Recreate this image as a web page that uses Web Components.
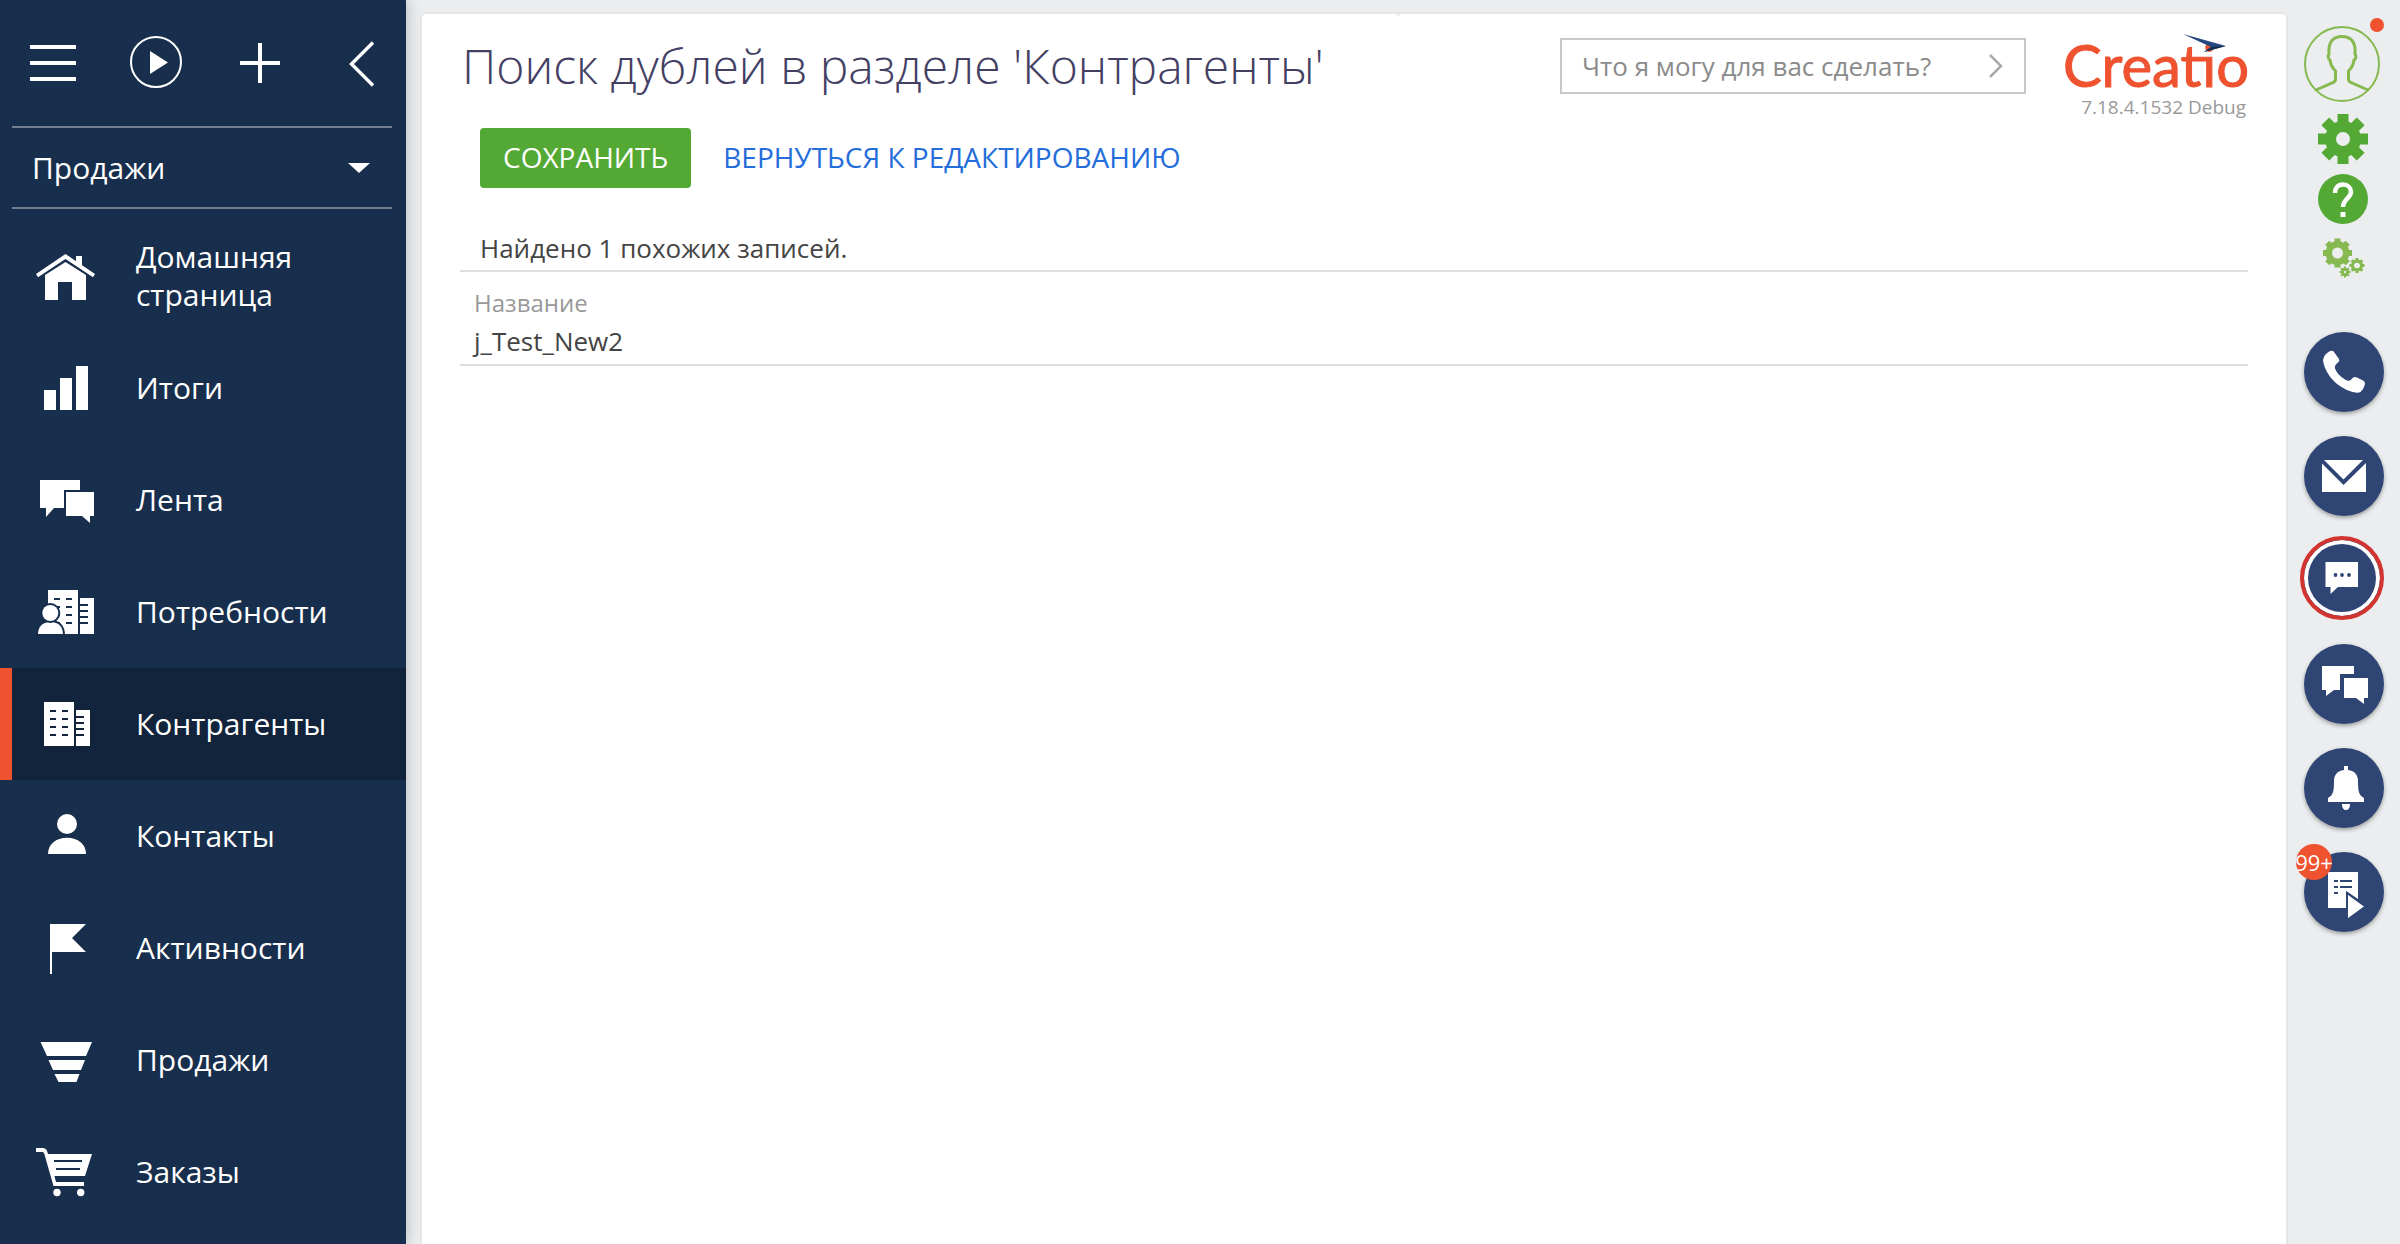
<!DOCTYPE html>
<html lang="ru">
<head>
<meta charset="utf-8">
<title>Поиск дублей</title>
<style>
  html, body { margin: 0; height: 100%; }
  body { font-family: "Open Sans", "Noto Sans", sans-serif; font-size: 26px; color: #444; background: #ebedef; }
</style>
</head>
<body>
<crm-shell>
  <crm-sidebar slot="nav">
    <crm-nav-item icon="home">Домашняя страница</crm-nav-item>
    <crm-nav-item icon="bars">Итоги</crm-nav-item>
    <crm-nav-item icon="feed">Лента</crm-nav-item>
    <crm-nav-item icon="leads">Потребности</crm-nav-item>
    <crm-nav-item icon="accounts" active>Контрагенты</crm-nav-item>
    <crm-nav-item icon="contact">Контакты</crm-nav-item>
    <crm-nav-item icon="flag">Активности</crm-nav-item>
    <crm-nav-item icon="funnel">Продажи</crm-nav-item>
    <crm-nav-item icon="cart">Заказы</crm-nav-item>
  </crm-sidebar>
  <crm-page>
    <crm-header slot="header" version="7.18.4.1532 Debug">Поиск дублей в разделе 'Контрагенты'</crm-header>
    <crm-button slot="actions" kind="primary">СОХРАНИТЬ</crm-button>
    <crm-button slot="actions" kind="flat">ВЕРНУТЬСЯ К РЕДАКТИРОВАНИЮ</crm-button>
    <crm-duplicates name="j_Test_New2">Найдено 1 похожих записей.</crm-duplicates>
  </crm-page>
  <crm-rail slot="rail"></crm-rail>
</crm-shell>

<script>
const define = (name, markup, setup) => customElements.define(name, class extends HTMLElement {
  connectedCallback() {
    if (this.shadowRoot) return;
    const root = this.attachShadow({ mode: 'open' });
    root.innerHTML = '<style>:host,*{box-sizing:border-box}button,input,select{font:inherit;color:inherit;margin:0}svg{display:block;flex:none}</style>' +
      (typeof markup === 'function' ? markup(this) : markup);
    if (setup) setup(root, this);
  }
});

define('crm-shell', `
<style>
  :host { display: flex; height: 100vh; overflow: hidden; }
  main { flex: 1; min-width: 0; display: flex; padding: 12px 0 0 14px; }
</style>
<slot name="nav"></slot><main><slot></slot></main><slot name="rail"></slot>`);

define('crm-sidebar', `
<style>
  :host { display: flex; flex-direction: column; flex: none; width: 406px; background: #172e4c; color: #fff;
          font-size: 30px; box-shadow: 0 0 14px rgba(0,0,0,.25); }
  .tools { display: flex; gap: 50px; height: 126px; padding: 30px 0 0 28px; }
  .tools button { flex: none; width: 52px; height: 64px; padding: 0; border: 0; background: none; cursor: pointer; }
  .place { margin: 0 14px 0 12px; border-top: 2px solid #737e90; border-bottom: 2px solid #737e90; }
  label { display: flex; align-items: center; height: 79px; padding-right: 22px; }
  select { appearance: none; flex: 1; height: 79px; border: 0; padding: 0 0 0 20px; background: none; outline: 0; }
  option { color: #222; }
  nav { padding-top: 11px; }
</style>
<div class="tools">
  <button aria-label="Меню"><svg width="52" height="64"><path fill="#fff" d="M2 15h46v4H2zM2 31h46v4H2zM2 47h46v4H2z"/></svg></button>
  <button aria-label="Запуск процесса"><svg width="52" height="64"><circle cx="26" cy="32" r="25" fill="none" stroke="#fff" stroke-width="2"/><path fill="#fff" d="M20 21v23l18-11.500z"/></svg></button>
  <button aria-label="Добавить"><svg width="52" height="64"><path fill="#fff" d="M8 31h40v4H8zM26 13h4v40h-4z"/></svg></button>
  <button aria-label="Свернуть"><svg width="52" height="64"><path fill="none" stroke="#fff" stroke-width="3.400" d="M39 12.500 17.500 34 39 55.500"/></svg></button>
</div>
<div class="place"><label>
  <select aria-label="Рабочее место"><option>Продажи</option></select>
  <svg width="22" height="10"><path fill="#fff" d="M0 0h22L11 10z"/></svg>
</label></div>
<nav><slot></slot></nav>`);

const building = (x) => `<path fill="#fff" fill-rule="evenodd" transform="translate(${x})" d="M0 34h30v44H0zM6 42v2h6v-2zM18 42v2h6v-2zM6 50v2h6v-2zM18 50v2h6v-2zM6 58v2h6v-2zM18 58v2h6v-2zM6 66v2h6v-2zM18 66v2h6v-2zM32 42h14v36H32v-10h8v-2h-8v-4h8v-2h-8v-4h8v-2h-8v-4h8v-2h-8z"/>`;
const NAV = {
  home: '<path d="M36 54 65.500 34 95 54l-2 3.200L65.500 39 38 57.200z"/><path d="M76 36h6v10l-6-4z"/><path d="M45 55 65.500 42 86 55v25H72V62H58v18H45z"/>',
  bars: '<path d="M44 58h12v20H44zM60 46h12v32H60zM76 34h12v44H76z"/>',
  feed: '<path d="M40 36h40v10H64v18H54l-8 9v-9h-6zM66 48h28v24h-4v7l-8-7H66z"/>',
  leads: building(48) + '<g stroke="#172e4c" stroke-width="4" paint-order="stroke"><path d="M38 79c0-8 4-13 12.500-13S63 71 63 79z"/><circle cx="50.300" cy="57" r="8"/></g><path fill="#172e4c" d="M36 78h30v4H36z"/>',
  accounts: building(44),
  contact: '<circle cx="67" cy="44" r="10"/><path d="M48 74c0-10 8-16.300 19-16.300S86 64 86 74z"/>',
  flag: '<path d="M50 32h36L72 46l14 14H52v22h-2z"/>',
  funnel: '<path d="M40.500 38H92l-6 14H47zM48.500 56H85l-4 10H53zM54.500 70H79.500L76.500 78h-18z"/>',
  cart: '<path fill-rule="evenodd" d="M36 32h6c4 0 5 2 6 6h44l-7 22H54.500l1.500 6h28v4H53.500L44.500 38.500C44 36.500 43.500 36 41.500 36H36zM54 44v2h28v-2zM56 52v2h24v-2z"/><circle cx="57" cy="76.500" r="3.700"/><circle cx="80.700" cy="76.500" r="3.700"/>'
};
define('crm-nav-item', (el) => `
<style>
  :host { display: block; }
  a { display: flex; align-items: center; height: 112px; border-left: 12px solid transparent; padding-right: 40px;
      color: #fff; text-decoration: none; line-height: 38px; }
  :host([active]) a { background: #11243c; border-left-color: #ef522f; }
</style>
<a href="#"><svg width="124" height="112" viewBox="12 0 124 112" fill="#fff">${NAV[el.getAttribute('icon')]}</svg><span><slot></slot></span></a>`);

define('crm-page', `
<style>
  :host { display: flex; flex-direction: column; flex: 1; min-width: 0; position: relative; background: #fff;
          border: 2px solid #e4e6e7; border-bottom: 0; border-radius: 6px 6px 0 0; padding: 18px 38px 0; }
  :host::before { content: ""; position: absolute; top: 0; left: 52.200%; border: 3px solid transparent; border-top-color: #ebedef; border-bottom: 0; }
  .actions { display: flex; gap: 32px; margin: 8px 0 42px 20px; }
</style>
<slot name="header"></slot>
<div class="actions"><slot name="actions"></slot></div>
<slot></slot>`);

define('crm-header', (el) => `
<style>
  :host { display: flex; align-items: flex-start; gap: 40px; }
  h1 { flex: 1; margin: 0; padding-left: 2px; font-size: 48px; line-height: 68px; font-weight: 300; color: #444064; white-space: nowrap; }
  .ask { display: flex; align-items: center; width: 466px; height: 56px; margin-top: 6px; border: 2px solid #c8c8c8; padding: 0 20px; }
  input { flex: 1; min-width: 0; height: 52px; border: 0; padding: 0; outline: 0; background: none; }
  input::placeholder { color: #8b8b8b; opacity: 1; }
  .ask button { border: 0; background: none; padding: 0; }
  .brand { margin-top: 2px; text-align: right; font-size: 19px; line-height: 26px; color: #999; }
  .brand svg { overflow: visible; margin-bottom: 2px; }
  .brand div { padding-right: 2px; }
</style>
<h1><slot></slot></h1>
<div class="ask"><input type="text" aria-label="Команда" placeholder="Что я могу для вас сделать?">
  <button aria-label="Выполнить"><svg width="16" height="26"><path fill="none" stroke="#aaa" stroke-width="2.500" d="M2 2l11 11L2 24"/></svg></button></div>
<div class="brand">
  <svg width="182" height="58"><text x="-3" y="53" font-family="Lato, sans-serif" font-size="58" fill="#ef522f" stroke="#ef522f">Creatio</text>
    <path fill="#24487f" d="M117 0l43 12-22 6 7-5z"/><path fill="#152c50" d="M160 12l-22 6 7-5z"/></svg>
  <div>${el.getAttribute('version')}</div>
</div>`);

define('crm-button', `
<style>
  :host { display: block; font-size: 28px; }
  button { height: 60px; border: 0; border-radius: 4px; padding: 0 0 2px; background: none; color: #246ddb; cursor: pointer; white-space: nowrap; }
  :host([kind=primary]) button { background: #53a934; color: #fff; padding: 0 23px 2px; }
</style>
<button><slot></slot></button>`);

define('crm-duplicates', (el) => `
<style>
  :host { display: block; }
  p { margin: 0; padding: 0 20px 4px; line-height: 36px; border-bottom: 2px solid #dedede; }
  dl { margin: 0; padding: 12px 14px 4px; line-height: 38px; border-bottom: 2px solid #dedede; }
  dt { font-size: 24px; color: #999; }
  dd { margin: 0; }
</style>
<p><slot></slot></p>
<dl><dt>Название</dt><dd>${el.getAttribute('name')}</dd></dl>`);

// Gear outline: n teeth between the outer and root radius, with a round hole.
const gear = (cx, cy, n, ro, rr, hole, tooth, fill) => {
  let s = '';
  for (let i = 0; i < n; i++) s += `<rect x="${cx - tooth / 2}" y="${cy - ro}" width="${tooth}" height="${ro - rr + 3}" transform="rotate(${i * 360 / n} ${cx} ${cy})"/>`;
  const w = rr - hole;
  return `<g fill="${fill}">${s}</g><circle cx="${cx}" cy="${cy}" r="${hole + w / 2}" fill="none" stroke="${fill}" stroke-width="${w}"/>`;
};

define('crm-rail', `
<style>
  :host { display: block; flex: none; width: 112px; padding: 26px 16px 0; }
  .top, .calls { display: flex; flex-direction: column; align-items: flex-start; }
  button { border: 0; background: none; padding: 0; cursor: pointer; display: block; }
  .avatar { position: relative; margin-bottom: 12px; }
  .avatar i { position: absolute; left: 66px; top: -8px; width: 14px; height: 14px; border-radius: 50%; background: #ef522f; }
  .tool { margin: 0 0 10px 14px; }
  .calls { gap: 24px; margin-top: 38px; }
</style>
<div class="top">
  <button class="avatar" aria-label="Профиль"><svg width="76" height="76" fill="none" stroke="#87b951">
    <circle cx="38" cy="38" r="37" stroke-width="2"/>
    <path stroke-width="3" d="M12 64l18-8 1.500-2V45c-3-3-5-7-5.500-11-2-1-2.500-4-1-6-1-12 4-17.500 13-17.500S52 16 51 28c1.500 2 1 5-1 6-.5 4-2.500 8-5.500 11v9l1.500 2 18 8"/></svg><i></i></button>
  <button class="tool" aria-label="Настройки"><svg width="50" height="50">${gear(25, 25, 8, 25, 18, 7, 11, '#53a934')}</svg></button>
  <button class="tool" aria-label="Справка"><svg width="50" height="50"><circle cx="25" cy="25" r="25" fill="#53a934"/>
    <path fill="none" stroke="#fff" stroke-width="4.500" d="M17 19c0-5 3-8.500 8-8.500s8 3.500 8 7.500c0 6-8 7-8 15"/><path fill="#fff" d="M22.500 38h5v5h-5z"/></svg></button>
  <button class="tool" aria-label="Конструктор"><svg width="50" height="50">${gear(19.500, 19, 8, 14.500, 12, 5.500, 6, '#87b951')}${gear(39, 31.500, 8, 7.500, 6, 3, 3, '#87b951')}${gear(27, 38, 8, 5.500, 4.200, 2, 2, '#87b951')}</svg></button>
</div>
<div class="calls">
  <crm-round label="Звонки"><svg width="80" height="80"><path fill="#fff" d="M20 25q1-3 6-6 3-1 4 1l5 7q1 2-1 3.500-4 3-3 6 2 6 10 11 5 3 7-1 2-2.500 5-1l6 3q3 2 1.500 5-1 4-4 6.500-2 1-5 .5C36 58 21 44 19 28z"/></svg></crm-round>
  <crm-round label="Почта"><svg width="80" height="80"><path fill="#fff" d="M20 24h39L39.500 43.500zM18 27.500l21.500 21.500L62 27v29H18z"/></svg></crm-round>
  <crm-round label="Чаты" ring><svg width="68" height="68"><path fill="#fff" d="M17.500 18H50v25H30l-7.500 7v-7h-5z"/><g fill="#2f4574"><circle cx="27.500" cy="31" r="1.900"/><circle cx="34" cy="31" r="1.900"/><circle cx="41" cy="31" r="1.900"/></g></svg></crm-round>
  <crm-round label="Лента"><svg width="80" height="80"><path fill="#fff" d="M18 22h32v8H36v16h-6l-8 6v-6h-4zM40 34h24v20h-4v6l-8-6H40z"/></svg></crm-round>
  <crm-round label="Уведомления"><svg width="80" height="80"><path fill="#fff" d="M40 18h4v4c7 1 10 5 10 11 0 11 1 14 6 17v4H24v-4c5-3 6-6 6-17 0-6 3-10 10-11zM38 56h8c0 4-1.500 6-4 6s-4-2-4-6z"/></svg></crm-round>
  <crm-round label="Задачи" badge="99+"><svg width="80" height="80"><path fill="#fff" d="M24 20h30v27L42 39v17H24z"/><path fill="#2f4574" d="M30 28h4v2h-4zM36 28h12v2H36zM30 34h4v2h-4zM36 34h12v2H36zM30 40h4v2h-4z"/><path fill="#fff" stroke="#2f4574" stroke-width="2" d="M43 41v27l18.500-13.500z"/></svg></crm-round>
</div>`);

define('crm-round', (el) => `
<style>
  :host { display: block; position: relative; }
  button { display: block; width: 80px; height: 80px; border: 0; border-radius: 50%; padding: 0; background: #2f4574; box-shadow: 0 2px 4px rgba(0,0,0,.35); cursor: pointer; }
  :host([ring]) { margin: -4px 0 0 -4px; }
  :host([ring]) button { width: 84px; height: 84px; border: 4px solid #d2352f; background: #2f4574; box-shadow: inset 0 0 0 4px #fff; }
  :host([ring]) ::slotted(svg) { margin: 4px; }
  b { position: absolute; left: -8px; top: -8px; display: flex; align-items: center; justify-content: center; width: 36px; height: 36px;
      border-radius: 50%; background: #ef522f; color: #fff; font-size: 22px; font-weight: 400; }
</style>
<button aria-label="${el.getAttribute('label')}"><slot></slot></button>${el.hasAttribute('badge') ? `<b>${el.getAttribute('badge')}</b>` : ''}`);
</script>
</body>
</html>
